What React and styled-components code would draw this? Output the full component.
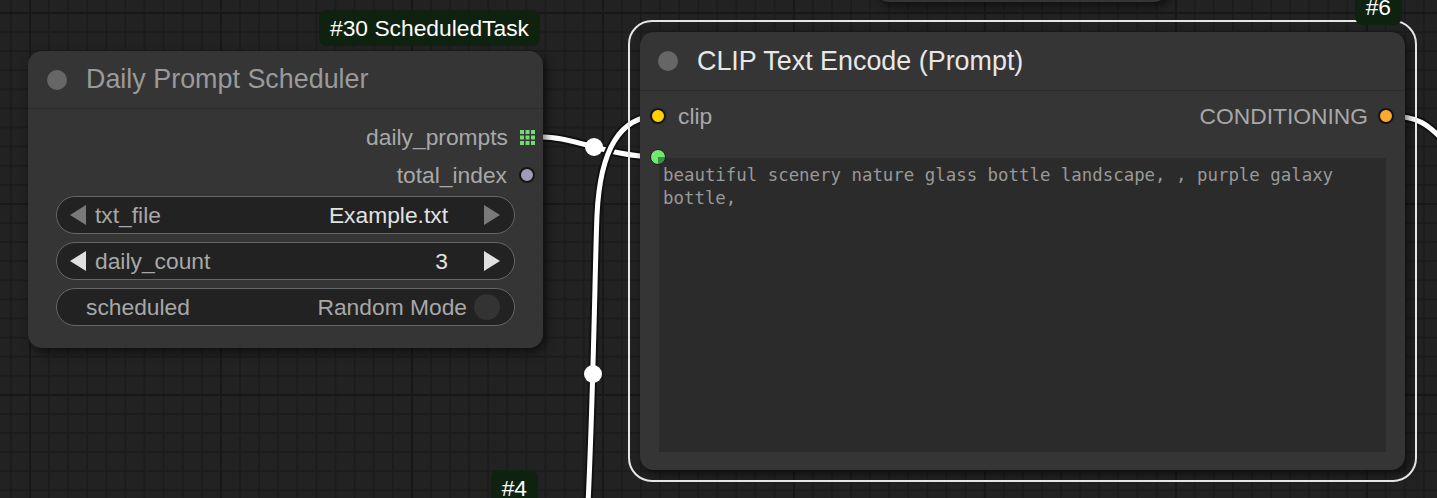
import React from 'react';
import styled, { createGlobalStyle } from 'styled-components';

const GlobalStyle = createGlobalStyle`
  html, body {
    margin: 0;
    padding: 0;
    background: #222;
    overflow: hidden;
  }
  body {
    font-family: "Liberation Sans", Arial, sans-serif;
  }
`;

const Canvas = styled.div`
  position: relative;
  width: 1437px;
  height: 498px;
  overflow: hidden;
  background-color: #222;
  background-image:
    linear-gradient(to right, #181818 2px, transparent 2px),
    linear-gradient(to bottom, #181818 2px, transparent 2px),
    linear-gradient(to right, #1c1c1c 1.5px, transparent 1.5px),
    linear-gradient(to bottom, #1c1c1c 1.5px, transparent 1.5px);
  background-size: 191px 191px, 191px 191px, 19.1px 19.1px, 19.1px 19.1px;
  background-position: 29px 12px;
`;

const Wires = styled.svg`
  position: absolute;
  left: 0;
  top: 0;
  pointer-events: none;
`;

const Node = styled.div`
  position: absolute;
  left: ${(p) => p.$x}px;
  top: ${(p) => p.$y}px;
  width: ${(p) => p.$w}px;
  height: ${(p) => p.$h}px;
  background: #353535;
  border-radius: 14px;
  box-shadow: 3px 4px 10px rgba(0, 0, 0, 0.55);
  display: flex;
  flex-direction: column;
`;

const Outline = styled.div`
  position: absolute;
  inset: -12px;
  border: 2px solid #e6e6e6;
  border-radius: 24px;
  pointer-events: none;
`;

const Badge = styled.div`
  position: absolute;
  right: 3px;
  bottom: calc(100% + ${(p) => p.$gap || 5}px);
  height: 36px;
  padding: 0 11px;
  border-radius: 8px;
  background: #0f210f;
  color: #fff;
  font-size: 22.8px;
  line-height: 37px;
  white-space: nowrap;
`;

const Title = styled.div`
  height: ${(p) => p.$h}px;
  flex-shrink: 0;
  display: flex;
  align-items: center;
  gap: 19px;
  padding-left: ${(p) => p.$pl}px;
  border-bottom: 1px solid #2c2c2c;
  font-size: 26.9px;
  color: ${(p) => (p.$active ? '#e8e8e8' : '#9a9a9a')};
`;

const TitleDot = styled.span`
  width: 20px;
  height: 20px;
  border-radius: 50%;
  background: #666;
`;

const Body = styled.div`
  position: relative;
  flex: 1;
  display: flex;
  flex-direction: column;
  padding: ${(p) => p.$pad};
`;

const OutputRow = styled.div`
  height: 38px;
  display: flex;
  align-items: center;
  justify-content: flex-end;
  gap: 12px;
  padding-right: 8px;
  font-size: 22.8px;
  color: #a8a8a8;
`;

const SlotRow = styled.div`
  height: 38px;
  display: flex;
  align-items: center;
  padding: 0 11px 0 10px;
  font-size: 22.8px;
  color: #a8a8a8;
`;

const SlotLabel = styled.span`
  margin: 0 12px;
  ${(p) => p.$right && 'margin-left: auto;'}
`;

const Dot = styled.span`
  width: 16px;
  height: 16px;
  border-radius: 50%;
  background: ${(p) => p.$color};
  border: 2px solid #151515;
  box-sizing: border-box;
  flex-shrink: 0;
`;

const Widgets = styled.div`
  display: flex;
  flex-direction: column;
  gap: 8px;
  margin: 2px 28px 0 28px;
`;

const Widget = styled.div`
  height: 38px;
  box-sizing: border-box;
  border: 1.5px solid #666;
  border-radius: 19px;
  background: #222;
  display: flex;
  align-items: center;
  padding: 0 14px 0 ${(p) => (p.$arrows ? 13 : 29)}px;
  font-size: 22.8px;
  color: #a8a8a8;
`;

const Arrow = styled.span`
  width: 0;
  height: 0;
  border-top: 10px solid transparent;
  border-bottom: 10px solid transparent;
  ${(p) => (p.$dir === 'left' ? 'border-right' : 'border-left')}: 16px solid
    ${(p) => (p.$dim ? '#7a7a7a' : '#e0e0e0')};
`;

const WLabel = styled.span`
  margin-left: ${(p) => (p.$arrows ? 9 : 0)}px;
`;

const WValue = styled.span`
  margin-left: auto;
  margin-right: ${(p) => p.$mr}px;
  color: ${(p) => (p.$muted ? '#a8a8a8' : '#e2e2e2')};
`;

const Toggle = styled.span`
  width: 26px;
  height: 26px;
  border-radius: 50%;
  background: #333;
`;

const InputDot = styled.span`
  position: absolute;
  left: 10px;
  top: 58px;
  width: 16px;
  height: 16px;
  border-radius: 50%;
  border: 1px solid #1e1e1e;
  box-sizing: border-box;
  background: conic-gradient(from 90deg, #3d8f3d 0 90deg, #72e872 90deg 360deg);
  z-index: 2;
`;

const PromptBox = styled.div`
  flex: 1;
  margin: 23px 19px 18px 19px;
  padding: 6px 4px 4px 4px;
  background: #2b2b2b;
  font-family: "DejaVu Sans Mono", "Liberation Mono", monospace;
  font-size: 17.4px;
  line-height: 23px;
  color: #999;
  white-space: pre-wrap;
  word-break: break-word;
`;

function ListIcon() {
  return (
    <svg width="15" height="15" viewBox="0 0 15 15">
      {[0, 5.5, 11].map((y) =>
        [0, 5.5, 11].map((x) => (
          <rect key={`${x}-${y}`} x={x} y={y} width="4" height="4" fill="#6fdc6f" />
        ))
      )}
    </svg>
  );
}

function Wire({ d }) {
  return (
    <g fill="none" strokeLinecap="round">
      <path d={d} stroke="#111" strokeWidth="9" />
      <path d={d} stroke="#fff" strokeWidth="5" />
    </g>
  );
}

function Knot({ x, y }) {
  return <circle cx={x} cy={y} r="9" fill="#fff" />;
}

export default function App() {
  return (
    <>
      <GlobalStyle />
      <Canvas>
        <Wires width="1437" height="498">
          <Wire d="M 543 137 C 575 137, 610 157, 658 157" />
          <Wire d="M 658 116 C 620 116, 600 150, 597 215 C 595 262, 594 374, 588 505" />
          <Wire d="M 1390 116 C 1415 116, 1428 122, 1450 148" />
          <Knot x={594} y={147} />
          <Knot x={593} y={374} />
        </Wires>

        <Node $x={875} $y={-200} $w={293} $h={202} />

        <Node $x={28} $y={51} $w={515} $h={297}>
          <Badge>#30 ScheduledTask</Badge>
          <Title $h={57} $pl={19}>
            <TitleDot />
            Daily Prompt Scheduler
          </Title>
          <Body $pad="9px 0 22px 0">
            <OutputRow>
              daily_prompts
              <ListIcon />
            </OutputRow>
            <OutputRow>
              total_index
              <Dot $color="#9d9db4" />
            </OutputRow>
            <Widgets>
              <Widget $arrows>
                <Arrow $dir="left" $dim />
                <WLabel $arrows>txt_file</WLabel>
                <WValue $mr={36}>Example.txt</WValue>
                <Arrow $dir="right" $dim />
              </Widget>
              <Widget $arrows>
                <Arrow $dir="left" />
                <WLabel $arrows>daily_count</WLabel>
                <WValue $mr={36}>3</WValue>
                <Arrow $dir="right" />
              </Widget>
              <Widget>
                <WLabel>scheduled</WLabel>
                <WValue $mr={7} $muted>
                  Random Mode
                </WValue>
                <Toggle />
              </Widget>
            </Widgets>
          </Body>
        </Node>

        <Node $x={640} $y={32} $w={765} $h={438}>
          <Outline />
          <Badge $gap={7}>#6</Badge>
          <Title $h={58} $pl={18} $active>
            <TitleDot />
            CLIP Text Encode (Prompt)
          </Title>
          <Body $pad="6px 0 0 0">
            <SlotRow>
              <Dot $color="#ffd100" />
              <SlotLabel>clip</SlotLabel>
              <SlotLabel $right>CONDITIONING</SlotLabel>
              <Dot $color="#ffa931" style={{ marginLeft: -2 }} />
            </SlotRow>
            <InputDot />
            <PromptBox>
              beautiful scenery nature glass bottle landscape, , purple galaxy bottle,
            </PromptBox>
          </Body>
        </Node>

        <Node $x={141} $y={512} $w={400} $h={200}>
          <Badge $gap={6}>#4</Badge>
        </Node>
      </Canvas>
    </>
  );
}
